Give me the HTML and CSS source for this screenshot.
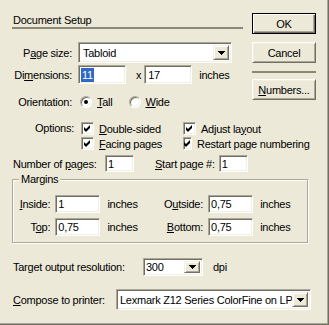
FILE: index.html
```html
<!DOCTYPE html>
<html>
<head>
    <meta charset="utf-8">
    <title>Document Setup</title>
    <link rel="stylesheet" href="styles.css">
</head>
<body>
    <div class="dialog">
        <div class="top">
            <div class="top-main">
                <div class="title">Document Setup</div>

                <div class="form-row page-size-row">
                    <span class="label">P<u>a</u>ge size:</span>
                    <div class="field select page-size">
                        <span class="select-text">Tabloid</span>
                        <span class="drop"><svg width="7" height="4" viewBox="0 0 7 4"><path d="M0 0h7v1h-1v1h-1v1h-1v1h-1v-1h-1v-1h-1v-1h-1z"/></svg></span>
                    </div>
                </div>

                <div class="form-row dims-row">
                    <span class="label">Di<u>m</u>ensions:</span>
                    <span class="field dim"><span class="selected">11</span></span>
                    <span class="times">x</span>
                    <span class="field dim">17</span>
                    <span class="unit">inches</span>
                </div>

                <div class="form-row orient-row">
                    <span class="label">Orientation:</span>
                    <span class="radio checked"></span><span class="radio-label"><u>T</u>all</span>
                    <span class="radio"></span><span class="radio-label"><u>W</u>ide</span>
                </div>
            </div>

            <div class="side">
                <button class="btn default">OK</button>
                <button class="btn">Cancel</button>
                <div class="side-sep"></div>
                <button class="btn"><u>N</u>umbers...</button>
            </div>
        </div>

        <div class="options">
            <span class="label options-label">Options:</span>
            <div class="option-col">
                <div class="option"><span class="check"><svg width="7" height="7" viewBox="0 0 7 7"><path d="M6 0v3l-4 4l-2-2v-3l2 2z"/></svg></span><span><u>D</u>ouble-sided</span></div>
                <div class="option"><span class="check"><svg width="7" height="7" viewBox="0 0 7 7"><path d="M6 0v3l-4 4l-2-2v-3l2 2z"/></svg></span><span><u>F</u>acing pages</span></div>
            </div>
            <div class="option-col">
                <div class="option"><span class="check"><svg width="7" height="7" viewBox="0 0 7 7"><path d="M6 0v3l-4 4l-2-2v-3l2 2z"/></svg></span><span>Adjust la<u>y</u>out</span></div>
                <div class="option"><span class="check"><svg width="7" height="7" viewBox="0 0 7 7"><path d="M6 0v3l-4 4l-2-2v-3l2 2z"/></svg></span><span>Restart page numbering</span></div>
            </div>
        </div>

        <div class="pages-row">
            <span class="pages-label">Number of <u>p</u>ages:</span>
            <span class="field small">1</span>
            <span class="start-label"><u>S</u>tart page #:</span>
            <span class="field small start">1</span>
        </div>

        <fieldset class="margins">
            <legend>Margins</legend>
            <div class="margin-row">
                <span class="m-label"><u>I</u>nside:</span>
                <span class="field margin-field">1</span>
                <span class="m-unit">inches</span>
                <span class="m-label right">O<u>u</u>tside:</span>
                <span class="field margin-field">0,75</span>
                <span class="m-unit">inches</span>
            </div>
            <div class="margin-row">
                <span class="m-label">T<u>o</u>p:</span>
                <span class="field margin-field">0,75</span>
                <span class="m-unit">inches</span>
                <span class="m-label right"><u>B</u>ottom:</span>
                <span class="field margin-field">0,75</span>
                <span class="m-unit">inches</span>
            </div>
        </fieldset>

        <div class="line-row target-row">
            <span class="target-label">Tar<u>g</u>et output resolution:</span>
            <div class="field select res-select">
                <span class="select-text">300</span>
                <span class="drop"><svg width="7" height="4" viewBox="0 0 7 4"><path d="M0 0h7v1h-1v1h-1v1h-1v1h-1v-1h-1v-1h-1v-1h-1z"/></svg></span>
            </div>
            <span class="dpi">dpi</span>
        </div>

        <div class="line-row printer-row">
            <span class="printer-label"><u>C</u>ompose to printer:</span>
            <div class="field select printer-select">
                <span class="select-text">Lexmark Z12 Series ColorFine on LPT1:</span>
                <span class="drop"><svg width="7" height="4" viewBox="0 0 7 4"><path d="M0 0h7v1h-1v1h-1v1h-1v1h-1v-1h-1v-1h-1v-1h-1z"/></svg></span>
            </div>
        </div>
    </div>
</body>
</html>
```

FILE: styles.css
```css
body {
    margin: 0;
    padding: 0;
    font-family: "Liberation Sans", Arial, sans-serif;
    font-size: 11px;
    letter-spacing: -0.25px;
    color: #000000;
    background-color: #ECE9D8;
}

u {
    text-underline-offset: 1px;
}

.dialog {
    width: 329px;
    height: 325px;
    box-sizing: border-box;
    background-color: #ECE9D8;
    box-shadow: inset -1px -1px #716F64, inset -2px -2px #ACA899;
    overflow: hidden;
}

/* top area: form on the left, buttons on the right */
.top {
    display: flex;
}

.top-main {
    width: 252px;
}

.title {
    margin-left: 12px;
    width: 230px;
    padding: 14px 0 0 1px;
    line-height: 13px;
    border-bottom: 2px solid #8A887B;
}

.form-row {
    display: flex;
    align-items: center;
    padding-left: 13px;
}

.form-row .label {
    width: 59px;
    margin-right: 6px;
    text-align: right;
    white-space: nowrap;
}

.page-size-row {
    margin-top: 13px;
    height: 21px;
}

.dims-row {
    margin-top: 2px;
    height: 19px;
}

.orient-row {
    margin-top: 11px;
    height: 14px;
}

/* sunken white box */
.field {
    display: flex;
    align-items: center;
    box-sizing: border-box;
    background-color: #ffffff;
    border: 1px solid;
    border-color: #ACA899 #ffffff #ffffff #ACA899;
    box-shadow: inset 1px 1px #716F64, inset -1px -1px #F1EFE2;
    padding-left: 3px;
    white-space: nowrap;
    overflow: hidden;
}

.select {
    padding-right: 2px;
}

.select-text {
    flex: 1;
    overflow: hidden;
}

.drop {
    flex: none;
    display: flex;
    align-items: center;
    justify-content: center;
    box-sizing: border-box;
    width: 16px;
    height: calc(100% - 4px);
    background-color: #ECE9D8;
    border: 1px solid;
    border-color: #F1EFE2 #716F64 #716F64 #F1EFE2;
    box-shadow: inset 1px 1px #ffffff, inset -1px -1px #ACA899;
}

.drop svg {
    display: block;
    fill: #000000;
}

.page-size {
    width: 154px;
    height: 21px;
    padding-left: 4px;
}

.dim {
    width: 48px;
    height: 19px;
}

.selected {
    background-color: #316AC5;
    color: #ffffff;
    line-height: 14px;
    padding: 0 1px;
    margin-left: -1px;
}

.times {
    margin: 0 3px 0 10px;
}

.unit {
    margin-left: 7px;
}

/* radio buttons */
.radio {
    position: relative;
    box-sizing: border-box;
    width: 12px;
    height: 12px;
    margin-left: 2px;
    border-radius: 50%;
    background-color: #ffffff;
    border: 1px solid;
    border-color: #ACA899 #ffffff #ffffff #ACA899;
    box-shadow: inset 1px 1px #716F64, inset -1px -1px #F1EFE2;
}

.radio.checked::after {
    content: "";
    position: absolute;
    left: 3px;
    top: 3px;
    width: 4px;
    height: 4px;
    border-radius: 50%;
    background-color: #000000;
}

.radio-label {
    margin-left: 5px;
    margin-right: 14px;
}

/* buttons column */
.side {
    width: 64px;
    padding-top: 13px;
}

.btn {
    display: block;
    box-sizing: border-box;
    width: 64px;
    height: 21px;
    padding: 0;
    font: inherit;
    letter-spacing: inherit;
    color: #000000;
    background-color: #ECE9D8;
    border: 1px solid;
    border-color: #ffffff #716F64 #716F64 #ffffff;
    box-shadow: inset 1px 1px #F1EFE2, inset -1px -1px #ACA899;
    margin-bottom: 8px;
}

.btn.default {
    border-color: #000000;
    box-shadow: inset 1px 1px #ffffff, inset -1px -1px #716F64, inset -2px -2px #ACA899;
}

.side-sep {
    height: 2px;
    background-color: #8A887B;
    margin: 1px 0 6px 0;
}

/* options */
.options {
    display: flex;
    margin-top: 12px;
    padding-left: 13px;
}

.options-label {
    width: 61px;
    margin-right: 7px;
    text-align: right;
    line-height: 15px;
}

.option-col {
    width: 102px;
}

.option {
    display: flex;
    align-items: center;
    height: 15px;
    white-space: nowrap;
}

.check {
    display: flex;
    align-items: center;
    justify-content: center;
    box-sizing: border-box;
    width: 13px;
    height: 13px;
    margin-right: 5px;
    background-color: #ffffff;
    border: 1px solid;
    border-color: #ACA899 #ffffff #ffffff #ACA899;
    box-shadow: inset 1px 1px #716F64, inset -1px -1px #F1EFE2;
}

.check svg {
    display: block;
    fill: #000000;
}

/* number of pages */
.pages-row {
    display: flex;
    align-items: center;
    height: 17px;
    margin-top: 4px;
    padding-left: 13px;
    white-space: nowrap;
}

.pages-label {
    width: 92px;
}

.small {
    width: 29px;
    height: 17px;
    padding-left: 2px;
}

.start-label {
    flex: none;
    margin: 0 4px 0 21px;
}

/* margins group box */
.margins {
    margin: 1px 0 0 12px;
    padding: 0 0 6px 0;
    width: 296px;
    box-sizing: border-box;
    border: 1px solid #ACA899;
    box-shadow: inset 1px 1px #ffffff, 1px 1px #ffffff;
    min-inline-size: 0;
}

.margins legend {
    margin-left: 6px;
    padding: 0 2px;
    line-height: 13px;
    background-color: #ECE9D8;
}

.margin-row {
    display: flex;
    align-items: center;
    height: 18px;
    margin-top: 9px;
}

.margin-row + .margin-row {
    margin-top: 5px;
}

.m-label {
    width: 39px;
    margin-right: 5px;
    text-align: right;
}

.m-label.right {
    width: 51px;
}

.margin-field {
    width: 47px;
    height: 18px;
    padding-left: 2px;
}

.m-unit {
    width: 49px;
    margin-left: 7px;
}

/* bottom rows */
.line-row {
    display: flex;
    align-items: center;
    padding-left: 13px;
    white-space: nowrap;
}

.target-row {
    margin-top: 15px;
    height: 18px;
}

.target-label {
    width: 130px;
}

.res-select {
    width: 60px;
    height: 18px;
    padding-left: 2px;
}

.dpi {
    margin-left: 10px;
}

.printer-row {
    margin-top: 13px;
    height: 21px;
}

.printer-label {
    width: 103px;
}

.printer-select {
    width: 195px;
    height: 21px;
    padding-left: 3px;
}
```
